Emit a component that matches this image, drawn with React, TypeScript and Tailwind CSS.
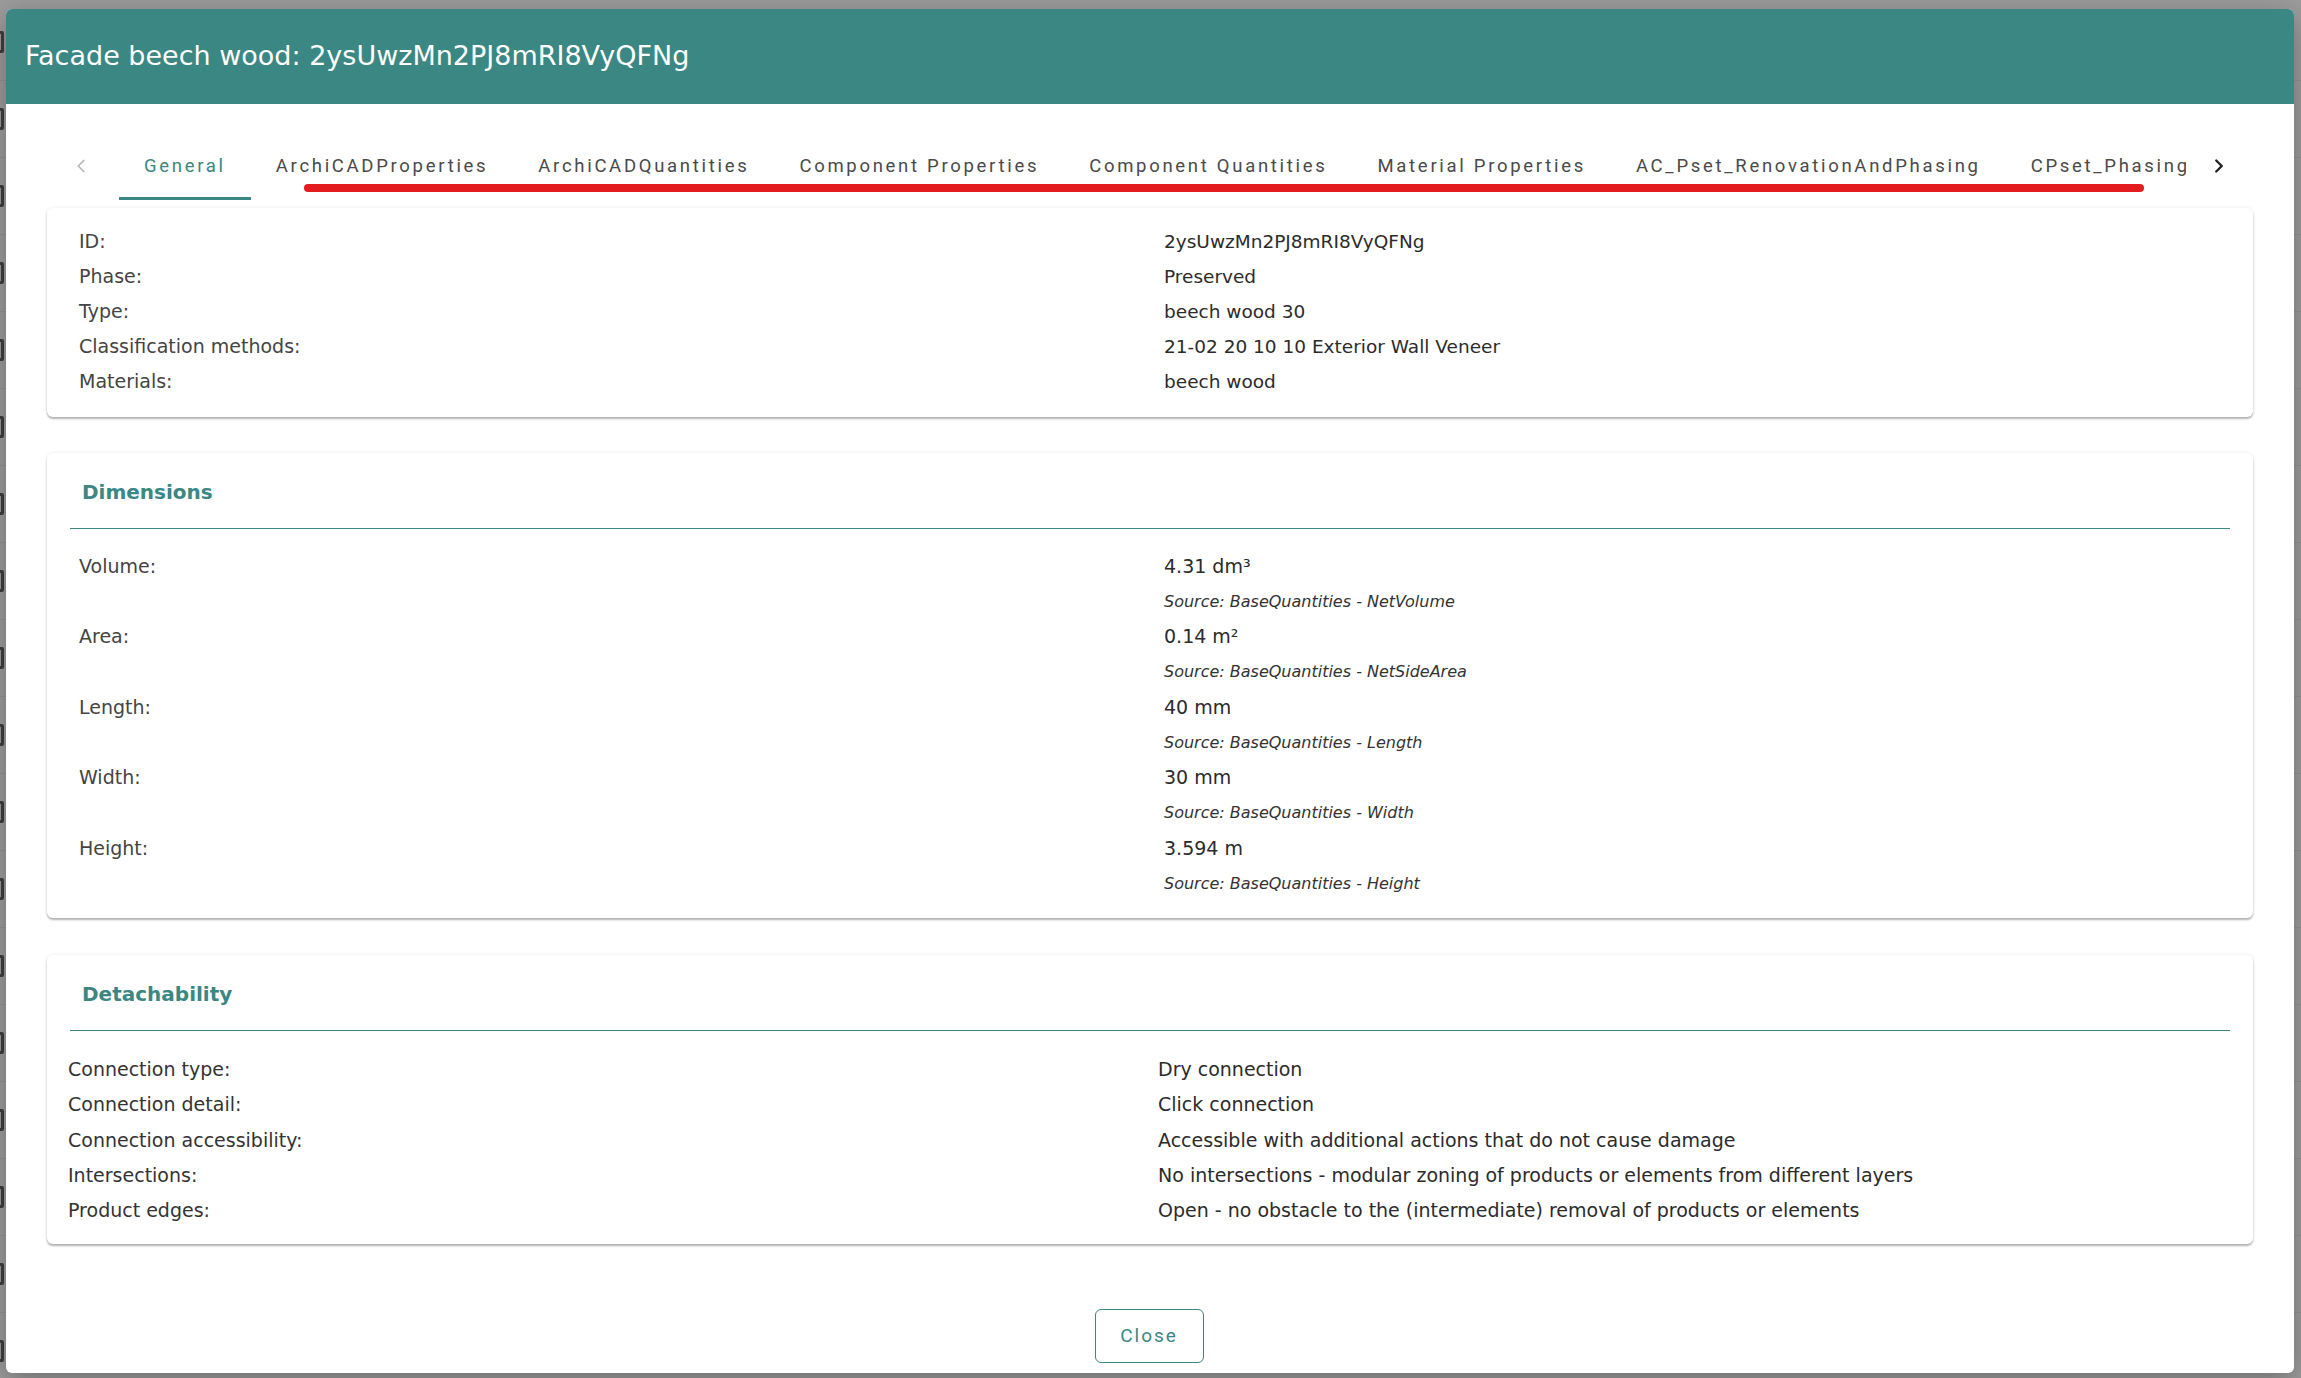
import { ChevronLeft, ChevronRight } from "lucide-react";

const tabs = [
  "General",
  "ArchiCADProperties",
  "ArchiCADQuantities",
  "Component Properties",
  "Component Quantities",
  "Material Properties",
  "AC_Pset_RenovationAndPhasing",
  "CPset_Phasing",
];

const general = [
  ["ID:", "2ysUwzMn2PJ8mRI8VyQFNg"],
  ["Phase:", "Preserved"],
  ["Type:", "beech wood 30"],
  ["Classification methods:", "21-02 20 10 10 Exterior Wall Veneer"],
  ["Materials:", "beech wood"],
];

const dimensions = [
  { label: "Volume:", value: "4.31 dm³", source: "BaseQuantities - NetVolume" },
  { label: "Area:", value: "0.14 m²", source: "BaseQuantities - NetSideArea" },
  { label: "Length:", value: "40 mm", source: "BaseQuantities - Length" },
  { label: "Width:", value: "30 mm", source: "BaseQuantities - Width" },
  { label: "Height:", value: "3.594 m", source: "BaseQuantities - Height" },
];

const detachability = [
  ["Connection type:", "Dry connection"],
  ["Connection detail:", "Click connection"],
  ["Connection accessibility:", "Accessible with additional actions that do not cause damage"],
  ["Intersections:", "No intersections - modular zoning of products or elements from different layers"],
  ["Product edges:", "Open - no obstacle to the (intermediate) removal of products or elements"],
];

const Card = ({ children }: { children: React.ReactNode }) => (
  <div className="rounded-[6px] bg-white shadow-[0_2px_2px_rgba(0,0,0,0.28),0_0_4px_rgba(0,0,0,0.08)]">
    {children}
  </div>
);

const SectionTitle = ({ title }: { title: string }) => (
  <div className="pt-[22px]">
    <h2 className="pl-[35px] text-[20px] leading-[34px] font-bold text-[#3b8783]">{title}</h2>
    <div className="mx-[23px] mt-[19px] border-t-[1.5px] border-[#3b8783]" />
  </div>
);

export default function App() {
  return (
    <div className="relative h-[1378px] w-full overflow-hidden bg-[#9c9c9c] font-['DejaVu_Sans',sans-serif]">
      {/* page behind the backdrop */}
      <div className="flex flex-col pt-[4px]">
        {Array.from({ length: 18 }).map((_, i) => (
          <div key={i} className="flex h-[77px] items-center border-b border-[#929292]">
            <div className="-ml-[14px] h-[22px] w-[18px] rounded-[2px] border-[3px] border-[#3f3f3f]" />
          </div>
        ))}
      </div>

      <div className="absolute left-[6px] top-[9px] flex h-[1364px] w-[2288px] flex-col overflow-hidden rounded-[6px] bg-white shadow-[0_8px_30px_rgba(0,0,0,0.3)]">
        <div className="flex h-[95px] shrink-0 items-center bg-[#3b8783] px-[19px]">
          <h1 className="text-[27px] text-white">Facade beech wood: 2ysUwzMn2PJ8mRI8VyQFNg</h1>
        </div>

        <div className="relative mt-[24px] flex h-[72px] items-center px-[45px] font-['Roboto',sans-serif]">
          <div className="flex h-full w-[60px] items-center justify-center pt-[3px] text-[#b5b5b5]">
            <ChevronLeft size={22} strokeWidth={1.8} />
          </div>
          <div className="ml-[8px] mr-[3px] flex h-full flex-1 overflow-hidden">
            {tabs.map((t, i) => (
              <div
                key={t}
                className={
                  i === 0
                    ? "relative flex h-full shrink-0 items-center px-[25px] pt-[5px] text-[18.5px] tracking-[2.7px] whitespace-nowrap text-[#3b8783]"
                    : "relative flex h-full shrink-0 items-center px-[25px] pt-[5px] text-[18.5px] tracking-[2.7px] whitespace-nowrap text-[#4a4a4a]"
                }
              >
                {t}
                {i === 0 && <div className="absolute bottom-0 left-0 right-0 h-[3px] bg-[#3b8783]" />}
              </div>
            ))}
          </div>
          <div className="flex h-full w-[60px] items-center justify-center pt-[3px] text-[#222]">
            <ChevronRight size={22} strokeWidth={2.6} />
          </div>
          {/* red annotation stroke */}
          <div className="absolute left-[298px] top-[56px] h-[8px] w-[1840px] rounded-full bg-[#e31c1f]" />
        </div>

        <div className="mt-[8px] flex flex-col px-[41px]">
          <Card>
            <div className="pt-[16px] pb-[18px] pl-[32px]">
              {general.map(([l, v]) => (
                <div key={l} className="grid h-[35px] grid-cols-[1085px_1fr] items-center text-[19px]">
                  <span className="text-[#444]">{l}</span>
                  <span className="text-[18.5px] text-[#2b2b2b]">{v}</span>
                </div>
              ))}
            </div>
          </Card>

          <div className="mt-[36px]">
            <Card>
              <SectionTitle title="Dimensions" />
              <div className="pt-[20px] pb-[17px] pl-[32px]">
                {dimensions.map((d) => (
                  <div key={d.label} className="grid h-[70.4px] grid-cols-[1085px_1fr] text-[19px]">
                    <span className="leading-[35px] text-[#444]">{d.label}</span>
                    <div className="flex flex-col">
                      <span className="leading-[35px] text-[#2b2b2b]">{d.value}</span>
                      <span className="text-[16px] leading-[35px] italic text-[#333]">Source: {d.source}</span>
                    </div>
                  </div>
                ))}
              </div>
            </Card>
          </div>

          <div className="mt-[37px]">
            <Card>
              <SectionTitle title="Detachability" />
              <div className="pt-[21px] pb-[16px] pl-[21px]">
                {detachability.map(([l, v]) => (
                  <div key={l} className="grid h-[35.2px] grid-cols-[1090px_1fr] items-center text-[19px]">
                    <span className="text-[#333]">{l}</span>
                    <span className="text-[#2b2b2b]">{v}</span>
                  </div>
                ))}
              </div>
            </Card>
          </div>
        </div>

        <div className="mt-[65px] flex justify-center pr-[2px]">
          <button className="h-[54px] w-[109px] rounded-[6px] border-[1.5px] border-[#3b8783] font-['Roboto',sans-serif] text-[19px] tracking-[2px] text-[#3b8783]">
            Close
          </button>
        </div>
      </div>
    </div>
  );
}
